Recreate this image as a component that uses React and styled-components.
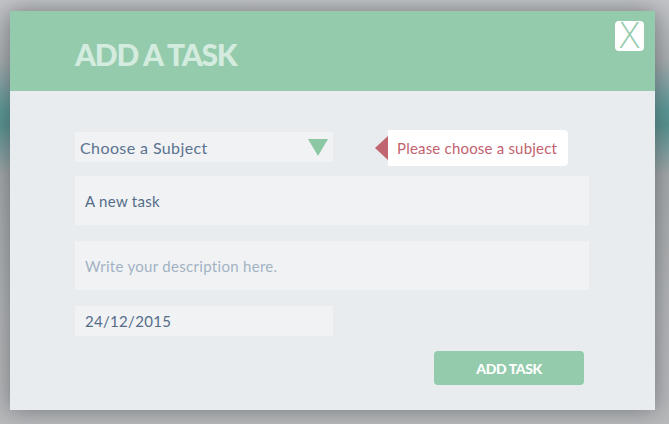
import styled, { createGlobalStyle } from 'styled-components'

const Global = createGlobalStyle`
  html, body {
    margin: 0;
    padding: 0;
  }
  body {
    font-family: Lato, 'Open Sans', sans-serif;
    background: #b6b8bb;
  }
`

const Backdrop = styled.div`
  height: 424px;
  padding: 11px 14px 0 10px;
  box-sizing: border-box;
  overflow: hidden;
  background:
    linear-gradient(180deg,
      #c4c6c9 0px,
      #a9adb1 60px,
      #5a9896 110px,
      #56928f 125px,
      #a4a8ab 175px,
      #b3b5b7 300px,
      #b8babc 424px);
`

const Modal = styled.div`
  width: 645px;
  height: 399px;
  background: #e8ecef;
  box-shadow: 0 0 22px rgba(60, 64, 70, 0.55);
  display: flex;
  flex-direction: column;
  position: relative;
`

const Header = styled.div`
  height: 80px;
  background: #95cbad;
  display: flex;
  align-items: center;
  padding: 6px 0 0 65px;
  box-sizing: border-box;
`

const Title = styled.h1`
  margin: 0;
  font-family: Lato, sans-serif;
  font-weight: 900;
  font-size: 30px;
  letter-spacing: -1.2px;
  color: #d4ecdf;
`

const Close = styled.button`
  position: absolute;
  top: 10px;
  right: 11px;
  width: 29px;
  height: 30px;
  border: none;
  border-radius: 4px;
  background: #fff;
  color: #95cbad;
  padding: 0;
  font-family: 'DejaVu Sans', sans-serif;
  font-weight: 200;
  font-size: 35px;
  line-height: 30px;
  display: flex;
  align-items: center;
  justify-content: center;
`

const Body = styled.div`
  padding: 41px 66px 0 65px;
  display: flex;
  flex-direction: column;
`

const Row = styled.div`
  position: relative;
  margin-top: ${p => p.gap || 0}px;
`

const Select = styled.div`
  width: 258px;
  height: 30px;
  background: #f0f2f4;
  display: flex;
  align-items: center;
  justify-content: space-between;
  padding: 0 5px;
  box-sizing: border-box;
  font-size: 16px;
  letter-spacing: 0.4px;
  color: #5b7290;
`

const Caret = styled.span`
  width: 0;
  height: 0;
  border-left: 10px solid transparent;
  border-right: 10px solid transparent;
  border-top: 17px solid #8dc8a5;
`

const Field = styled.div`
  width: ${p => p.w || 514}px;
  height: ${p => p.h || 49}px;
  background: #f0f2f4;
  display: flex;
  align-items: center;
  padding-left: 10px;
  box-sizing: border-box;
  font-size: 15px;
  letter-spacing: 0.3px;
  color: ${p => (p.muted ? '#a3b2c3' : '#556c89')};
`

const Tip = styled.div`
  position: absolute;
  left: 313px;
  top: -2px;
  width: 180px;
  height: 36px;
  background: #fff;
  border-radius: 0 4px 4px 0;
  display: flex;
  align-items: center;
  padding-left: 9px;
  box-sizing: border-box;
  font-size: 15px;
  letter-spacing: 0.2px;
  color: #c3626e;

  &::before {
    content: '';
    position: absolute;
    left: -13px;
    top: 6px;
    border-top: 12px solid transparent;
    border-bottom: 12px solid transparent;
    border-right: 13px solid #c0646f;
  }
`

const Actions = styled.div`
  display: flex;
  justify-content: flex-end;
  padding-right: 5px;
  margin-top: 15px;
`

const Submit = styled.button`
  width: 150px;
  height: 34px;
  border: none;
  border-radius: 4px;
  background: #95cbad;
  color: #fff;
  font-family: Lato, sans-serif;
  font-weight: 900;
  font-size: 14px;
  letter-spacing: -0.4px;
`

export default function App() {
  return (
    <>
      <Global />
      <Backdrop>
        <Modal>
          <Header>
            <Title>ADD A TASK</Title>
          </Header>
          <Close>X</Close>
          <Body>
            <Row>
              <Select>
                Choose a Subject
                <Caret />
              </Select>
              <Tip>Please choose a subject</Tip>
            </Row>
            <Row gap={14}>
              <Field>A new task</Field>
            </Row>
            <Row gap={16}>
              <Field muted>Write your description here.</Field>
            </Row>
            <Row gap={16}>
              <Field w={258} h={30}>24/12/2015</Field>
            </Row>
            <Actions>
              <Submit>ADD TASK</Submit>
            </Actions>
          </Body>
        </Modal>
      </Backdrop>
    </>
  )
}
